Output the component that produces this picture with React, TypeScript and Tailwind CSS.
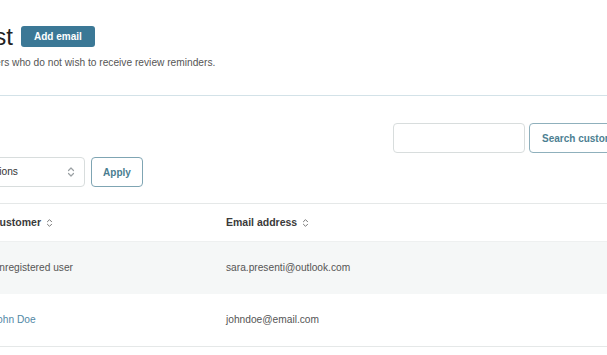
import React from 'react'

function SortIcon({ className = '' }: { className?: string }) {
    return (
        <svg viewBox="0 0 8 12" className={className} fill="none" stroke="currentColor" strokeWidth="1.2" strokeLinecap="round" strokeLinejoin="round">
            <path d="M1.5 4.5 L4 2 L6.5 4.5" />
            <path d="M1.5 7.5 L4 10 L6.5 7.5" />
        </svg>
    )
}

export default function App() {
    return (
        <div className="w-[607px] h-[355px] overflow-hidden bg-white font-['Liberation_Sans',Arial,sans-serif] text-[#333]">
            <div className="pt-[26px] pb-[25px] border-b border-[#d3e2e8]">
                <div className="flex items-center gap-2 h-[21px]">
                    <h1 className="w-[140px] -ml-[127px] shrink-0 text-right text-[24px] leading-none text-[#222] whitespace-nowrap">
                        Blocklist
                    </h1>
                    <button className="h-[21px] px-[13px] rounded-[3px] bg-[#3b7896] text-white text-[10px] font-bold">
                        Add email
                    </button>
                </div>
                <p className="mt-[9px] -ml-[40px] text-[10.2px] leading-[14px] text-[#555] whitespace-nowrap">
                    Customers who do not wish to receive review reminders.
                </p>
            </div>

            <div className="mt-[27px] pl-[393px] flex gap-1 h-[30px]">
                <input className="w-[132px] shrink-0 h-[30px] rounded-[4px] border border-[#d8dddd] bg-white" />
                <button className="shrink-0 h-[30px] px-[12px] rounded-[4px] border border-[#8fb0bc] text-[10px] font-bold text-[#4d7f92] whitespace-nowrap">
                    Search customers
                </button>
            </div>

            <div className="mt-[4px] flex gap-[6px] h-[30px]">
                <div className="w-[133px] -ml-[48px] shrink-0 h-[30px] flex items-center justify-between pl-[10px] pr-[9px] rounded-[4px] border border-[#d8dddd] text-[10.2px] text-[#333]">
                    <span className="whitespace-nowrap">Bulk actions</span>
                    <SortIcon className="w-[8px] h-[12px] text-[#9aa0a3]" />
                </div>
                <button className="shrink-0 w-[52px] h-[30px] rounded-[4px] border border-[#7fa5b3] text-[10px] font-bold text-[#4a7d90]">
                    Apply
                </button>
            </div>

            <div className="mt-[16px] -ml-[20px] w-[700px] border-t border-b border-[#e5e8e8]">
                <div className="grid grid-cols-[234px_1fr] h-[37px] items-center text-[10.5px] font-bold text-[#3a3a3a]">
                    <div className="px-[12px] flex items-center gap-[5px]">
                        Customer <SortIcon className="w-[7px] h-[10px] text-[#777]" />
                    </div>
                    <div className="px-[12px] flex items-center gap-[5px]">
                        Email address <SortIcon className="w-[7px] h-[10px] text-[#777]" />
                    </div>
                </div>
                <div className="grid grid-cols-[234px_1fr] h-[53px] items-center bg-[#f5f7f7] border-t border-[#eef0f0] text-[10.2px] text-[#555]">
                    <div className="px-[12px]">Unregistered user</div>
                    <div className="px-[12px]">sara.presenti@outlook.com</div>
                </div>
                <div className="grid grid-cols-[234px_1fr] h-[52px] items-center text-[10.2px] text-[#555]">
                    <div className="px-[12px] text-[#5288a6]">John Doe</div>
                    <div className="px-[12px]">johndoe@email.com</div>
                </div>
            </div>
        </div>
    )
}
